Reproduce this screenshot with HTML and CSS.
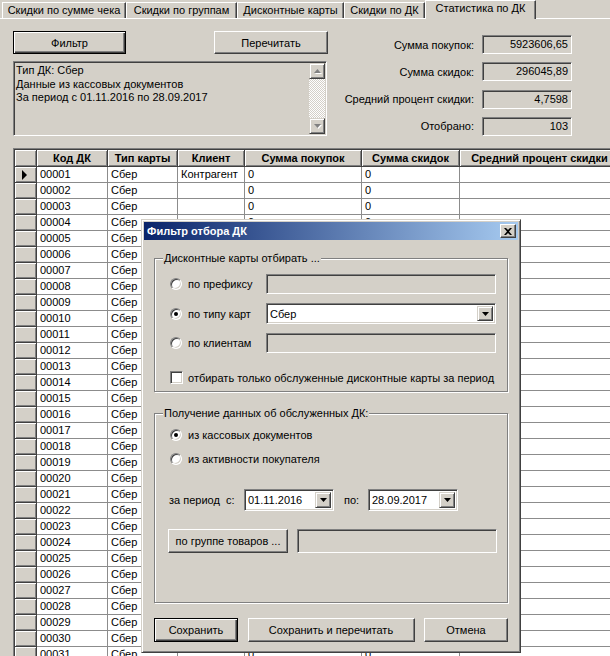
FILE: index.html
```html
<!DOCTYPE html>
<html lang="ru">
<head>
  <meta charset="UTF-8">
  <title>Статистика по ДК</title>
  <link rel="stylesheet" href="styles.css">
</head>
<body>

  <!-- Tabs -->
  <div class="tabs">
    <div class="tab t1">Скидки по сумме чека</div>
    <div class="tab t2">Скидки по группам</div>
    <div class="tab t3">Дисконтные карты</div>
    <div class="tab t4">Скидки по ДК</div>
    <div class="tab active t5">Статистика по ДК</div>
  </div>

  <!-- Top panel: buttons, info memo and totals -->
  <div class="top">
    <div class="left">
      <div class="btn-row">
        <button class="btn default w-filter">Фильтр</button>
        <button class="btn w-reread">Перечитать</button>
      </div>
      <div class="memo">
        <div class="memo-text">Тип ДК: Сбер<br>Данные из кассовых документов<br>За период с 01.11.2016 по 28.09.2017</div>
        <div class="vscroll">
          <div class="sb-btn">
            <svg width="7" height="5" viewBox="0 0 7 5"><polygon points="3.5,0 7,4 0,4" fill="#808080"/></svg>
          </div>
          <div class="sb-track"></div>
          <div class="sb-btn">
            <svg width="7" height="5" viewBox="0 0 7 5"><polygon points="0,0 7,0 3.5,4" fill="#808080"/></svg>
          </div>
        </div>
      </div>
    </div>

    <div class="stats">
      <span class="stat-label">Сумма покупок:</span><div class="field ro">5923606,65</div>
      <span class="stat-label">Сумма скидок:</span><div class="field ro">296045,89</div>
      <span class="stat-label">Средний процент скидки:</span><div class="field ro">4,7598</div>
      <span class="stat-label">Отобрано:</span><div class="field ro">103</div>
    </div>
  </div>

  <!-- Cards grid -->
  <div class="grid">
    <table>
      <colgroup>
        <col style="width:22px"><col style="width:71px"><col style="width:70px"><col style="width:67px">
        <col style="width:117px"><col style="width:98px"><col style="width:160px"><col>
      </colgroup>
      <thead>
        <tr><th class="ind"></th><th>Код ДК</th><th>Тип карты</th><th>Клиент</th><th>Сумма покупок</th><th>Сумма скидок</th><th>Средний процент скидки</th><th></th></tr>
      </thead>
      <tbody>
        <tr><td class="ind"><span class="cur"></span></td><td>00001</td><td>Сбер</td><td>Контрагент</td><td>0</td><td>0</td><td></td><td></td></tr>
        <tr><td class="ind"></td><td>00002</td><td>Сбер</td><td></td><td>0</td><td>0</td><td></td><td></td></tr>
        <tr><td class="ind"></td><td>00003</td><td>Сбер</td><td></td><td>0</td><td>0</td><td></td><td></td></tr>
        <tr><td class="ind"></td><td>00004</td><td>Сбер</td><td></td><td>0</td><td>0</td><td></td><td></td></tr>
        <tr><td class="ind"></td><td>00005</td><td>Сбер</td><td></td><td>0</td><td>0</td><td></td><td></td></tr>
        <tr><td class="ind"></td><td>00006</td><td>Сбер</td><td></td><td>0</td><td>0</td><td></td><td></td></tr>
        <tr><td class="ind"></td><td>00007</td><td>Сбер</td><td></td><td>0</td><td>0</td><td></td><td></td></tr>
        <tr><td class="ind"></td><td>00008</td><td>Сбер</td><td></td><td>0</td><td>0</td><td></td><td></td></tr>
        <tr><td class="ind"></td><td>00009</td><td>Сбер</td><td></td><td>0</td><td>0</td><td></td><td></td></tr>
        <tr><td class="ind"></td><td>00010</td><td>Сбер</td><td></td><td>0</td><td>0</td><td></td><td></td></tr>
        <tr><td class="ind"></td><td>00011</td><td>Сбер</td><td></td><td>0</td><td>0</td><td></td><td></td></tr>
        <tr><td class="ind"></td><td>00012</td><td>Сбер</td><td></td><td>0</td><td>0</td><td></td><td></td></tr>
        <tr><td class="ind"></td><td>00013</td><td>Сбер</td><td></td><td>0</td><td>0</td><td></td><td></td></tr>
        <tr><td class="ind"></td><td>00014</td><td>Сбер</td><td></td><td>0</td><td>0</td><td></td><td></td></tr>
        <tr><td class="ind"></td><td>00015</td><td>Сбер</td><td></td><td>0</td><td>0</td><td></td><td></td></tr>
        <tr><td class="ind"></td><td>00016</td><td>Сбер</td><td></td><td>0</td><td>0</td><td></td><td></td></tr>
        <tr><td class="ind"></td><td>00017</td><td>Сбер</td><td></td><td>0</td><td>0</td><td></td><td></td></tr>
        <tr><td class="ind"></td><td>00018</td><td>Сбер</td><td></td><td>0</td><td>0</td><td></td><td></td></tr>
        <tr><td class="ind"></td><td>00019</td><td>Сбер</td><td></td><td>0</td><td>0</td><td></td><td></td></tr>
        <tr><td class="ind"></td><td>00020</td><td>Сбер</td><td></td><td>0</td><td>0</td><td></td><td></td></tr>
        <tr><td class="ind"></td><td>00021</td><td>Сбер</td><td></td><td>0</td><td>0</td><td></td><td></td></tr>
        <tr><td class="ind"></td><td>00022</td><td>Сбер</td><td></td><td>0</td><td>0</td><td></td><td></td></tr>
        <tr><td class="ind"></td><td>00023</td><td>Сбер</td><td></td><td>0</td><td>0</td><td></td><td></td></tr>
        <tr><td class="ind"></td><td>00024</td><td>Сбер</td><td></td><td>0</td><td>0</td><td></td><td></td></tr>
        <tr><td class="ind"></td><td>00025</td><td>Сбер</td><td></td><td>0</td><td>0</td><td></td><td></td></tr>
        <tr><td class="ind"></td><td>00026</td><td>Сбер</td><td></td><td>0</td><td>0</td><td></td><td></td></tr>
        <tr><td class="ind"></td><td>00027</td><td>Сбер</td><td></td><td>0</td><td>0</td><td></td><td></td></tr>
        <tr><td class="ind"></td><td>00028</td><td>Сбер</td><td></td><td>0</td><td>0</td><td></td><td></td></tr>
        <tr><td class="ind"></td><td>00029</td><td>Сбер</td><td></td><td>0</td><td>0</td><td></td><td></td></tr>
        <tr><td class="ind"></td><td>00030</td><td>Сбер</td><td></td><td>0</td><td>0</td><td></td><td></td></tr>
        <tr><td class="ind"></td><td>00031</td><td>Сбер</td><td></td><td>0</td><td>0</td><td></td><td></td></tr>
      </tbody>
    </table>
  </div>

  <!-- Filter dialog -->
  <div class="dialog">
    <div class="titlebar">
      <span>Фильтр отбора ДК</span>
      <div class="close-btn">
        <svg width="8" height="7" viewBox="0 0 8 7"><path d="M0 0h2l2 2 2-2h2L5 3.5 8 7H6L4 5 2 7H0l3-3.5z" fill="#000"/></svg>
      </div>
    </div>

    <div class="dlg-body">
      <div class="group g1">
        <div class="legend">Дисконтные карты отбирать ...</div>
        <div class="pick-rows">
          <div class="opt"><span class="radio"></span>по префиксу</div>
          <div class="field off"></div>

          <div class="opt"><span class="radio on"></span>по типу карт</div>
          <div class="field combo">
            <span class="combo-text">Сбер</span>
            <div class="drop"><svg width="7" height="4" viewBox="0 0 7 4"><polygon points="0,0 7,0 3.5,4" fill="#000"/></svg></div>
          </div>

          <div class="opt"><span class="radio"></span>по клиентам</div>
          <div class="field off"></div>
        </div>
        <div class="check-row"><span class="checkbox"></span>отбирать только обслуженные дисконтные карты за период</div>
      </div>

      <div class="group g2">
        <div class="legend">Получение данных об обслуженных ДК:</div>
        <div class="src-list">
          <div class="opt"><span class="radio on"></span>из кассовых документов</div>
          <div class="opt"><span class="radio"></span>из активности покупателя</div>
        </div>
        <div class="period">
          <span class="period-label">за период&nbsp; с:</span>
          <div class="field combo date">
            <span class="combo-text">01.11.2016</span>
            <div class="drop"><svg width="7" height="4" viewBox="0 0 7 4"><polygon points="0,0 7,0 3.5,4" fill="#000"/></svg></div>
          </div>
          <span class="to-label">по:</span>
          <div class="field combo date">
            <span class="combo-text">28.09.2017</span>
            <div class="drop"><svg width="7" height="4" viewBox="0 0 7 4"><polygon points="0,0 7,0 3.5,4" fill="#000"/></svg></div>
          </div>
        </div>
        <div class="goods-row">
          <button class="btn w-goods">по группе товаров ...</button>
          <div class="field off w-goods-field"></div>
        </div>
      </div>

      <div class="dlg-buttons">
        <button class="btn default w-save">Сохранить</button>
        <button class="btn w-save-reread">Сохранить и перечитать</button>
        <button class="btn w-cancel">Отмена</button>
      </div>
    </div>
  </div>

</body>
</html>
```

FILE: styles.css
```css
* {
  box-sizing: border-box;
}

body {
  margin: 0;
  width: 610px;
  height: 656px;
  overflow: hidden;
  position: relative;
  background: #d4d0c8;
  color: #000;
  font-family: "Liberation Sans", Arial, sans-serif;
  font-size: 11px;
}

/* ---------- tabs ---------- */

.tabs {
  display: flex;
  align-items: flex-end;
  height: 19px;
  padding-left: 2px;
  border-bottom: 1px solid #fff;
}

.tab {
  height: 16px;
  line-height: 13px;
  padding-top: 1px;
  text-align: center;
  white-space: nowrap;
  border-top: 1px solid #fff;
  border-left: 1px solid #fff;
  border-right: 1px solid #404040;
  box-shadow: inset -1px 0 #808080;
}

.t1 { width: 124px; }
.t2 { width: 111px; }
.t3 { width: 107px; }
.t4 { width: 81px; }

.tab.active {
  width: 111px;
  height: 19px;
  margin-bottom: -1px;
  padding-top: 1px;
  background: #d4d0c8;
}

/* ---------- classic 3d bits ---------- */

.btn {
  font-family: inherit;
  font-size: 11px;
  color: #000;
  background: #d4d0c8;
  padding: 0;
  border: 1px solid;
  border-color: #fff #404040 #404040 #fff;
  box-shadow: inset -1px -1px #808080;
  height: 23px;
}

.btn.default {
  border: 1px solid #000;
  box-shadow: inset 1px 1px #fff, inset -1px -1px #404040, inset -2px -2px #808080;
}

.field {
  height: 20px;
  background: #fff;
  border: 1px solid;
  border-color: #808080 #fff #fff #808080;
  box-shadow: inset 1px 1px #404040, inset -1px -1px #d4d0c8;
}

.field.ro,
.field.off {
  background: #d4d0c8;
}

.field.ro {
  height: 19px;
  line-height: 17px;
  padding-right: 3px;
  text-align: right;
}

/* ---------- top panel ---------- */

.top {
  display: flex;
  padding: 12px 38px 0 13px;
}

.left {
  width: 315px;
}

.btn-row {
  display: flex;
  justify-content: space-between;
}

.w-filter { width: 113px; }
.w-reread { width: 114px; }

.memo {
  display: flex;
  width: 314px;
  height: 75px;
  margin-top: 7px;
  border: 1px solid;
  border-color: #808080 #fff #fff #808080;
  box-shadow: inset 1px 1px #404040, inset -1px -1px #d4d0c8;
  padding: 1px;
}

.memo-text {
  flex: 1;
  padding: 1px 0 0 1px;
  line-height: 13.5px;
}

.vscroll {
  width: 16px;
  display: flex;
  flex-direction: column;
}

.sb-btn {
  height: 16px;
  display: flex;
  align-items: center;
  justify-content: center;
  border: 1px solid;
  border-color: #d4d0c8 #404040 #404040 #d4d0c8;
  box-shadow: inset 1px 1px #fff, inset -1px -1px #808080;
}

.sb-btn svg {
  filter: drop-shadow(1px 1px 0 #fff);
}

.sb-track {
  flex: 1;
  background: repeating-conic-gradient(#fff 0 25%, #d4d0c8 0 50%) 0 0 / 2px 2px;
}

.stats {
  margin-left: auto;
  padding-top: 4px;
  display: grid;
  grid-template-columns: auto 90px;
  column-gap: 8px;
  row-gap: 8px;
  align-items: center;
}

.stat-label {
  text-align: right;
}

/* ---------- grid ---------- */

.grid {
  width: 720px;
  height: 520px;
  margin: 12px 0 0 13px;
  overflow: hidden;
  border: 1px solid;
  border-color: #808080 #fff #fff #808080;
  box-shadow: inset 1px 1px #404040;
  padding: 1px 0 0 1px;
  background: #fff;
}

.grid table {
  table-layout: fixed;
  border-collapse: separate;
  border-spacing: 0;
  width: 716px;
  font-size: 11px;
}

.grid th {
  height: 17px;
  padding: 0;
  font-weight: bold;
  text-align: center;
  white-space: nowrap;
  overflow: hidden;
  background: #d4d0c8;
  border-right: 1px solid #404040;
  border-bottom: 1px solid #404040;
  box-shadow: inset 1px 1px #fff, inset -1px -1px #808080;
}

.grid td {
  height: 16px;
  padding: 0 0 0 3px;
  line-height: 15px;
  white-space: nowrap;
  overflow: hidden;
  border-right: 1px solid #8c8c8c;
  border-bottom: 1px solid #8c8c8c;
}

.grid td.ind {
  padding: 0;
  background: #d4d0c8;
  border-color: #404040;
  box-shadow: inset 1px 1px #fff, inset -1px -1px #808080;
}

.cur {
  display: block;
  width: 0;
  height: 0;
  margin-left: 7px;
  border-top: 5px solid transparent;
  border-bottom: 5px solid transparent;
  border-left: 5px solid #000;
}

/* ---------- dialog ---------- */

.dialog {
  position: absolute;
  left: 141px;
  top: 219px;
  width: 380px;
  height: 434px;
  padding: 2px;
  background: #d4d0c8;
  border: 1px solid;
  border-color: #d4d0c8 #404040 #404040 #d4d0c8;
  box-shadow: inset 1px 1px #fff, inset -1px -1px #808080;
}

.titlebar {
  height: 18px;
  display: flex;
  align-items: center;
  justify-content: space-between;
  padding: 0 2px 0 3px;
  background: linear-gradient(to right, #0a246a, #a6caf0);
  color: #fff;
  font-weight: bold;
}

.close-btn {
  width: 16px;
  height: 14px;
  display: flex;
  align-items: center;
  justify-content: center;
  background: #d4d0c8;
  border: 1px solid;
  border-color: #fff #404040 #404040 #fff;
  box-shadow: inset -1px -1px #808080;
}

.dlg-body {
  padding: 18px 10px 0;
}

.group {
  border: 1px solid #808080;
  box-shadow: inset 1px 1px #fff, 1px 1px #fff;
}

.g1 { height: 134px; }
.g2 { height: 190px; margin-top: 21px; }

.legend {
  width: fit-content;
  margin: -7px 0 0 8px;
  padding: 0 1px;
  line-height: 13px;
  background: #d4d0c8;
}

.opt {
  display: flex;
  align-items: center;
  gap: 6px;
}

.radio {
  width: 12px;
  height: 12px;
  border-radius: 50%;
  background: #fff;
  border: 1px solid;
  border-color: #808080 #fff #fff #808080;
  box-shadow: inset 1px 1px #404040, inset -1px -1px #d4d0c8;
  display: flex;
  align-items: center;
  justify-content: center;
}

.radio.on::after {
  content: "";
  width: 4px;
  height: 4px;
  border-radius: 50%;
  background: #000;
}

.checkbox {
  width: 13px;
  height: 13px;
  background: #fff;
  border: 1px solid;
  border-color: #808080 #fff #fff #808080;
  box-shadow: inset 1px 1px #404040, inset -1px -1px #d4d0c8;
}

.pick-rows {
  display: grid;
  grid-template-columns: 96px 230px;
  grid-template-rows: 20px 21px 20px;
  row-gap: 9px;
  align-items: center;
  padding: 9px 0 0 15px;
}

.pick-rows .field {
  height: 100%;
}

.combo {
  display: flex;
  align-items: center;
  padding: 2px;
}

.combo-text {
  flex: 1;
  padding-left: 1px;
}

.drop {
  width: 16px;
  height: 100%;
  display: flex;
  align-items: center;
  justify-content: center;
  background: #d4d0c8;
  border: 1px solid;
  border-color: #d4d0c8 #404040 #404040 #d4d0c8;
  box-shadow: inset 1px 1px #fff, inset -1px -1px #808080;
}

.check-row {
  display: flex;
  align-items: center;
  gap: 5px;
  margin: 18px 0 0 15px;
}

.src-list {
  display: flex;
  flex-direction: column;
  gap: 8px;
  padding: 7px 0 0 15px;
}

.src-list .opt {
  height: 16px;
}

.period {
  display: flex;
  align-items: center;
  margin: 22px 0 0 14px;
  height: 22px;
}

.period-label {
  width: 75px;
}

.field.date {
  width: 90px;
  height: 22px;
}

.to-label {
  width: 24px;
  margin-left: 10px;
}

.goods-row {
  display: flex;
  margin: 18px 0 0 13px;
}

.w-goods { width: 120px; height: 24px; }

.w-goods-field {
  width: 200px;
  height: 24px;
  margin-left: 9px;
}

.dlg-buttons {
  display: flex;
  justify-content: space-between;
  margin-top: 15px;
}

.w-save { width: 84px; height: 24px; }
.w-save-reread { width: 167px; height: 24px; }
.w-cancel { width: 84px; height: 24px; }
```
